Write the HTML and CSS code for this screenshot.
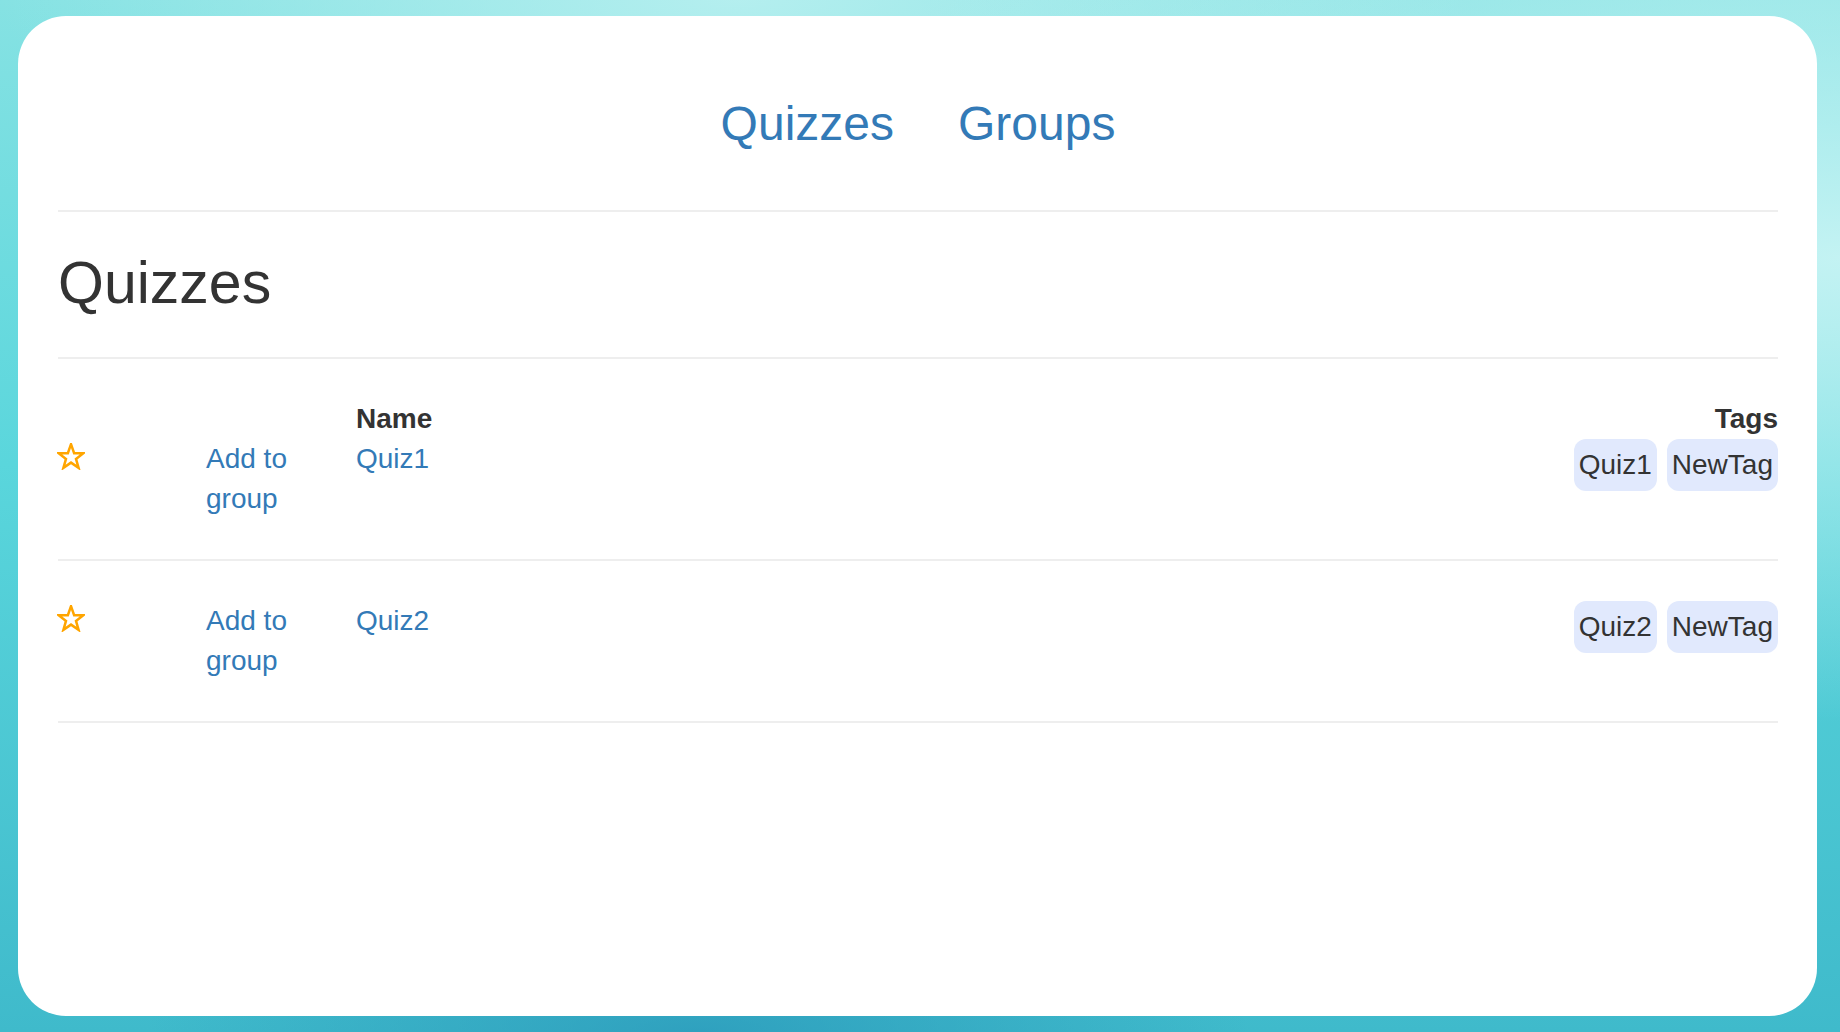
FILE: index.html
```html
<!DOCTYPE html>
<html lang="en">
<head>
<meta charset="utf-8">
<title>Quizzes</title>
<link rel="stylesheet" href="styles.css">
</head>
<body>
<div class="card">
  <nav class="nav">
    <a class="nav-link" href="#">Quizzes</a>
    <a class="nav-link" href="#">Groups</a>
  </nav>
  <h1 class="title">Quizzes</h1>
  <div class="list">
    <div class="row row-first">
      <div class="cell"></div>
      <div class="cell"></div>
      <div class="cell head">Name</div>
      <div class="cell head right">Tags</div>
      <div class="cell"><svg class="star" width="28" height="27" viewBox="0 0 28 27"><polygon points="14,1.2 17.12,10.2 26.4,10.2 19,15.9 21.6,24.9 14,19.6 6.4,24.9 9,15.9 1.6,10.2 10.88,10.2" fill="none" stroke="#ffa500" stroke-width="2.5" stroke-linejoin="miter"/></svg></div>
      <div class="cell"><a class="link" href="#">Add to group</a></div>
      <div class="cell"><a class="link" href="#">Quiz1</a></div>
      <div class="cell tags"><span class="tag">Quiz1</span><span class="tag">NewTag</span></div>
    </div>
    <div class="row">
      <div class="cell"><svg class="star" width="28" height="27" viewBox="0 0 28 27"><polygon points="14,1.2 17.12,10.2 26.4,10.2 19,15.9 21.6,24.9 14,19.6 6.4,24.9 9,15.9 1.6,10.2 10.88,10.2" fill="none" stroke="#ffa500" stroke-width="2.5" stroke-linejoin="miter"/></svg></div>
      <div class="cell"><a class="link" href="#">Add to group</a></div>
      <div class="cell"><a class="link" href="#">Quiz2</a></div>
      <div class="cell tags"><span class="tag">Quiz2</span><span class="tag">NewTag</span></div>
    </div>
  </div>
</div>
</body>
</html>
```
FILE: styles.css
```css
html, body {
  margin: 0;
  padding: 0;
}
body {
  height: 1032px;
  overflow: hidden;
  font-family: "Liberation Sans", Arial, sans-serif;
  color: #333333;
  background:
    radial-gradient(ellipse 60% 45% at 100% 25%, rgba(200, 244, 244, 0.95), rgba(200, 244, 244, 0) 100%),
    radial-gradient(ellipse 40% 20% at 40% 0%, rgba(185, 240, 240, 0.9), rgba(185, 240, 240, 0) 100%),
    radial-gradient(ellipse 30% 12% at 38% 100%, rgba(40, 150, 185, 0.7), rgba(40, 150, 185, 0) 100%),
    linear-gradient(to bottom, #86e2e3 0%, #5ad6dc 45%, #3fbacb 100%);
  box-sizing: border-box;
  padding: 16px 23px 16px 18px;
}
.card {
  height: 1000px;
  background: #ffffff;
  border-radius: 48px;
  padding: 0 39px 0 40px;
  box-sizing: border-box;
}
.nav {
  display: flex;
  justify-content: center;
  gap: 64px;
  padding: 80px 0 58px;
  border-bottom: 2px solid #eeeeee;
}
.nav-link {
  font-size: 48px;
  line-height: 56px;
  color: #337ab7;
  text-decoration: none;
}
.title {
  margin: 0;
  padding: 38px 0 41px;
  font-size: 59px;
  line-height: 66px;
  font-weight: 400;
  color: #333333;
  border-bottom: 2px solid #eeeeee;
}
.row {
  display: grid;
  grid-template-columns: 148px 150px 1fr auto;
  padding: 40px 0 40px;
  border-bottom: 2px solid #eeeeee;
  font-size: 28px;
  line-height: 40px;
}
.cell {
  min-width: 0;
}
.head {
  font-weight: 700;
  color: #333333;
}
.head.right, .tags {
  text-align: right;
}
.row-first .head {
  grid-column: 3;
}
.row-first .head.right {
  grid-column: 4;
}
.star {
  display: block;
  margin-top: 4px;
  margin-left: -1px;
}
.link {
  color: #337ab7;
  text-decoration: none;
}
.tags {
  display: flex;
  justify-content: flex-end;
  align-items: flex-start;
  gap: 10px;
}
.tag {
  display: inline-block;
  background: #e1e9fd;
  color: #333333;
  border-radius: 12px;
  padding: 6px 5px;
  line-height: 40px;
}
```
